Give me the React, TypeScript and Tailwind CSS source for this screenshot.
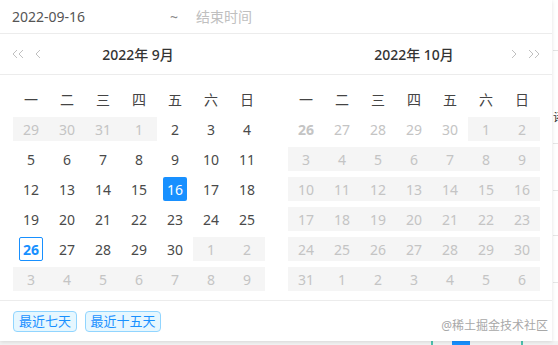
import React from "react";

type Cell = { d: number; kind: "n" | "dis" | "out" | "sel" | "today" | "outbold" };

const FONT = { fontFamily: '"Noto Sans", "Noto Sans CJK SC", sans-serif' };
const WEEK = ["一", "二", "三", "四", "五", "六", "日"];

const mk = (nums: number[], kind: Cell["kind"]): Cell[] => nums.map((d) => ({ d, kind }));

const leftRows: Cell[][] = [
  [...mk([29, 30, 31, 1], "dis"), ...mk([2, 3, 4], "n")],
  mk([5, 6, 7, 8, 9, 10, 11], "n"),
  [...mk([12, 13, 14, 15], "n"), { d: 16, kind: "sel" }, ...mk([17, 18], "n")],
  mk([19, 20, 21, 22, 23, 24, 25], "n"),
  [{ d: 26, kind: "today" }, ...mk([27, 28, 29, 30], "n"), ...mk([1, 2], "dis")],
  mk([3, 4, 5, 6, 7, 8, 9], "dis"),
];

const rightRows: Cell[][] = [
  [{ d: 26, kind: "outbold" }, ...mk([27, 28, 29, 30], "out"), ...mk([1, 2], "dis")],
  mk([3, 4, 5, 6, 7, 8, 9], "dis"),
  mk([10, 11, 12, 13, 14, 15, 16], "dis"),
  mk([17, 18, 19, 20, 21, 22, 23], "dis"),
  mk([24, 25, 26, 27, 28, 29, 30], "dis"),
  mk([31, 1, 2, 3, 4, 5, 6], "dis"),
];

function DayCell({ c }: { c: Cell }) {
  if (c.kind === "dis") {
    return (
      <div className="h-[30px] flex items-center">
        <div className="h-6 w-full bg-[#f5f5f5] flex items-center justify-center text-[#c4c4c4]">{c.d}</div>
      </div>
    );
  }
  if (c.kind === "sel") {
    return (
      <div className="h-[30px] flex items-center justify-center">
        <div className="h-6 w-6 rounded-[2px] bg-[#1890ff] text-white flex items-center justify-center">{c.d}</div>
      </div>
    );
  }
  if (c.kind === "today") {
    return (
      <div className="h-[30px] flex items-center justify-center">
        <div className="h-6 w-6 rounded-[2px] border border-[#1890ff] text-[#1890ff] font-bold flex items-center justify-center">
          {c.d}
        </div>
      </div>
    );
  }
  const cls =
    c.kind === "out"
      ? "text-[#c4c4c4]"
      : c.kind === "outbold"
      ? "text-[#c4c4c4] font-bold"
      : "text-[#4a4a4a]";
  return <div className={`h-[30px] flex items-center justify-center ${cls}`}>{c.d}</div>;
}

function Grid({ rows }: { rows: Cell[][] }) {
  return (
    <div className="pt-[9px]">
      <div className="grid grid-cols-7 h-[30px] items-center text-[#444]">
        {WEEK.map((w) => (
          <div key={w} className="text-center">
            {w}
          </div>
        ))}
      </div>
      {rows.map((r, i) => (
        <div key={i} className="grid grid-cols-7">
          {r.map((c, j) => (
            <DayCell key={j} c={c} />
          ))}
        </div>
      ))}
    </div>
  );
}

const Chev = ({ dir, double }: { dir: "l" | "r"; double?: boolean }) => (
  <svg width={double ? 12 : 6} height="10" viewBox={double ? "0 0 12 10" : "0 0 6 10"} fill="none" stroke="#c0c0c0" strokeWidth="1">
    {dir === "l" ? (
      double ? (
        <>
          <path d="M5 1 L1 5 L5 9" />
          <path d="M11 1 L7 5 L11 9" />
        </>
      ) : (
        <path d="M5 1 L1 5 L5 9" />
      )
    ) : double ? (
      <>
        <path d="M1 1 L5 5 L1 9" />
        <path d="M7 1 L11 5 L7 9" />
      </>
    ) : (
      <path d="M1 1 L5 5 L1 9" />
    )}
  </svg>
);

export default function App() {
  return (
    <div className="relative w-[558px] h-[345px] bg-white overflow-hidden text-[14px]" style={FONT}>
      {/* background page fragments */}
      <div className="absolute left-[553px] top-[50px] w-[5px] h-px bg-[#e3e3e3]" />
      <div className="absolute left-[553px] top-[112px] w-[5px] h-[12px] overflow-hidden">
        <div className="text-[12px] text-[#333] leading-none">诸</div>
      </div>
      <div className="absolute left-[553px] top-[143px] w-[5px] h-px bg-[#e6e6e6]" />
      <div className="absolute left-[553px] top-[190px] w-[5px] h-px bg-[#e6e6e6]" />
      <div className="absolute left-[553px] top-[235px] w-[5px] h-px bg-[#e6e6e6]" />
      <div className="absolute left-[553px] top-[282px] w-[5px] h-px bg-[#e6e6e6]" />
      <div className="absolute left-[0px] top-[341px] w-[558px] h-[4px] bg-[#f3f3f3]" />
      <div className="absolute left-[431px] top-[340px] w-[2px] h-[5px] bg-[#4dc4b0]" />
      <div className="absolute left-[452px] top-[341px] w-[18px] h-[4px] bg-[#1890ff]" />
      <div className="absolute left-[521px] top-[340px] w-[2px] h-[5px] bg-[#4dc4b0]" />

      {/* panel */}
      <div className="relative w-[552px] h-[341px] bg-white shadow-[0_1px_4px_rgba(0,0,0,0.12)] flex flex-col">
        <div className="h-[34px] flex items-center border-b border-[#ececec]">
          <div className="w-[170px] pl-3 text-[#555]">2022-09-16</div>
          <div className="w-[26px] text-[#888]">~</div>
          <div className="text-[#c0c0c0]">结束时间</div>
        </div>

        <div className="flex">
          <div className="w-[276px]">
            <div className="h-[41px] border-b border-[#ececec] flex items-center px-3 relative">
              <div className="flex items-center gap-[11px]">
                <Chev dir="l" double />
                <Chev dir="l" />
              </div>
              <div className="absolute inset-0 flex items-center justify-center font-medium text-[#333]">2022年 9月</div>
            </div>
            <div className="pl-[13px] pr-[11px]">
              <Grid rows={leftRows} />
            </div>
          </div>
          <div className="w-[276px]">
            <div className="h-[41px] border-b border-[#ececec] flex items-center justify-end px-3 relative">
              <div className="absolute inset-0 flex items-center justify-center font-medium text-[#333]">2022年 10月</div>
              <div className="flex items-center gap-[11px] relative">
                <Chev dir="r" />
                <Chev dir="r" double />
              </div>
            </div>
            <div className="px-3">
              <Grid rows={rightRows} />
            </div>
          </div>
        </div>

        <div className="mt-[6px] border-t border-[#ececec] flex-1 flex items-start pt-[10px] pl-[13px] gap-2">
          <div className="h-[21px] w-[64px] flex items-center justify-center rounded-[4px] border border-[#91d5ff] bg-[#e6f7ff] text-[#1890ff] text-[13px]">
            最近七天
          </div>
          <div className="h-[21px] w-[76px] flex items-center justify-center rounded-[4px] border border-[#91d5ff] bg-[#e6f7ff] text-[#1890ff] text-[13px]">
            最近十五天
          </div>
        </div>
      </div>

      <div className="absolute right-[10px] top-[318px] text-[12px] text-[#a8a8a8] leading-[16px]">@稀土掘金技术社区</div>
    </div>
  );
}
